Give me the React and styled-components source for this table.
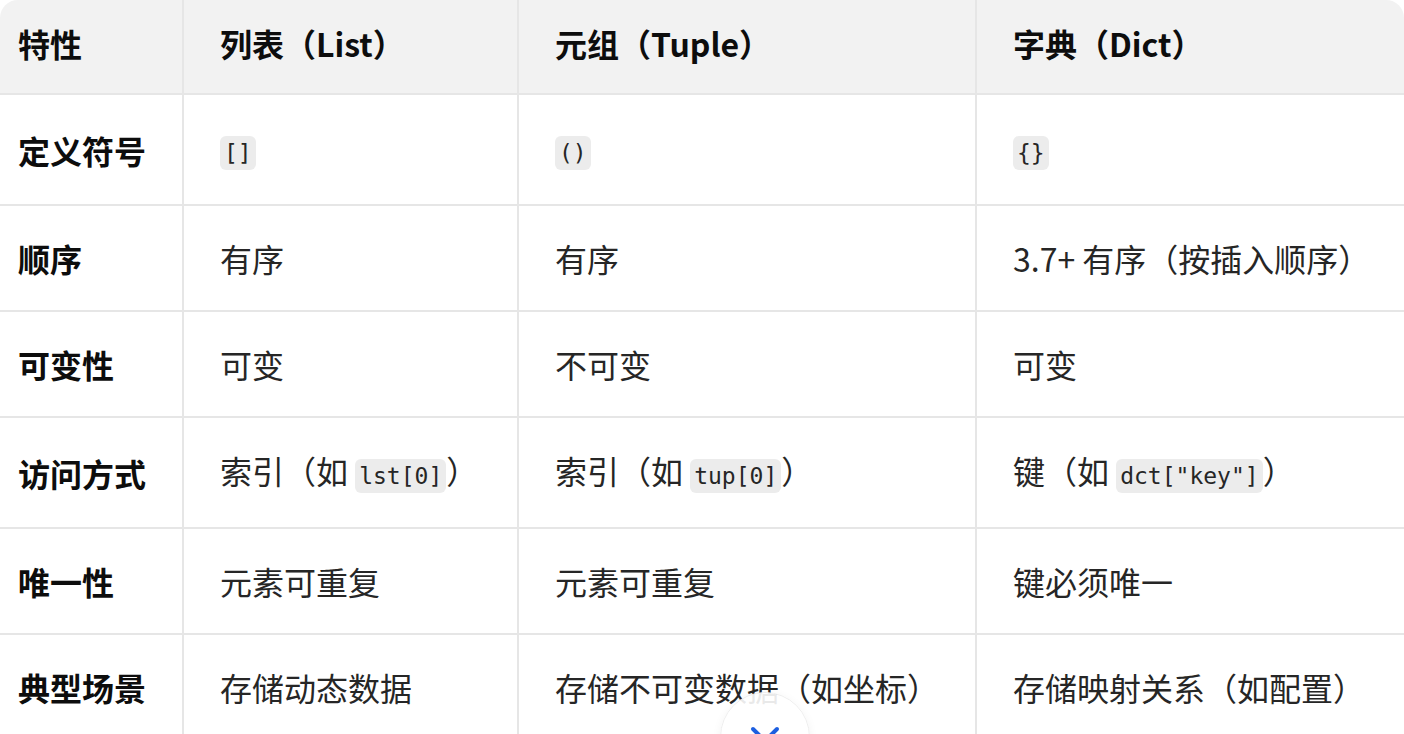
import React from 'react';
import styled, { createGlobalStyle } from 'styled-components';
import { ChevronDown } from 'lucide-react';

const GlobalStyle = createGlobalStyle`
  html, body {
    margin: 0;
    padding: 0;
    background: #fff;
  }
  body {
    font-family: "Noto Sans CJK SC", "Noto Sans", sans-serif;
    color: #1a1a1a;
    overflow: hidden;
  }
`;

const COLUMNS = [183, 335, 458, 428];

const Wrapper = styled.div`
  width: 1404px;
  border-radius: 18px 18px 0 0;
  overflow: hidden;
`;

const Table = styled.table`
  width: 100%;
  table-layout: fixed;
  border-collapse: collapse;
  font-size: 32px;
  line-height: 42px;
`;

const Col = styled.col`
  width: ${props => props.width}px;
`;

const HeadRow = styled.tr`
  background: #f2f2f2;
`;

const HeadCell = styled.th`
  text-align: left;
  font-weight: 700;
  color: #0d0d0d;
  padding: 22px 16px 29px 36px;
  border: 2px solid #e6e6e6;
  border-top: none;

  &:first-child {
    padding-left: 18px;
    border-left: none;
  }
  &:last-child {
    border-right: none;
  }
`;

const Cell = styled.td`
  padding: 31px 16px 31px 36px;
  border: 2px solid #e6e6e6;
  vertical-align: middle;
  color: ${props => (props.label ? '#0d0d0d' : '#262626')};
  font-weight: ${props => (props.label ? 700 : 400)};

  &:first-child {
    padding-left: 18px;
    border-left: none;
  }
  &:last-child {
    border-right: none;
  }
`;

const Code = styled.code`
  font-family: "DejaVu Sans Mono", "Liberation Mono", monospace;
  font-size: 23px;
  line-height: 40px;
  background: #ececec;
  border-radius: 6px;
  padding: 4px 4px;
`;

const ScrollButton = styled.button`
  position: fixed;
  left: 720px;
  top: 692px;
  width: 90px;
  height: 90px;
  border-radius: 50%;
  background: rgba(255, 255, 255, 0.9);
  border: 1px solid #eeeeee;
  box-shadow: 0 2px 10px rgba(0, 0, 0, 0.05);
  display: flex;
  align-items: flex-start;
  justify-content: center;
  padding: 18px 0 0;
  color: #1d5fe0;
  cursor: pointer;
`;

const HEADERS = ['特性', '列表（List）', '元组（Tuple）', '字典（Dict）'];

const ROWS = [
  ['定义符号', <Code>[]</Code>, <Code>()</Code>, <Code>{'{}'}</Code>],
  ['顺序', '有序', '有序', '3.7+ 有序（按插入顺序）'],
  ['可变性', '可变', '不可变', '可变'],
  [
    '访问方式',
    <>索引（如 <Code>lst[0]</Code>）</>,
    <>索引（如 <Code>tup[0]</Code>）</>,
    <>键（如 <Code>dct["key"]</Code>）</>,
  ],
  ['唯一性', '元素可重复', '元素可重复', '键必须唯一'],
  ['典型场景', '存储动态数据', '存储不可变数据（如坐标）', '存储映射关系（如配置）'],
];

export default function App() {
  return (
    <>
      <GlobalStyle />
      <Wrapper>
        <Table>
          <colgroup>
            {COLUMNS.map((w, i) => <Col key={i} width={w} />)}
          </colgroup>
          <thead>
            <HeadRow>
              {HEADERS.map(h => <HeadCell key={h}>{h}</HeadCell>)}
            </HeadRow>
          </thead>
          <tbody>
            {ROWS.map(row => (
              <tr key={row[0]}>
                {row.map((cell, i) => (
                  <Cell key={i} label={i === 0}>{cell}</Cell>
                ))}
              </tr>
            ))}
          </tbody>
        </Table>
      </Wrapper>
      <ScrollButton aria-label="scroll down">
        <ChevronDown size={48} strokeWidth={2} />
      </ScrollButton>
    </>
  );
}
